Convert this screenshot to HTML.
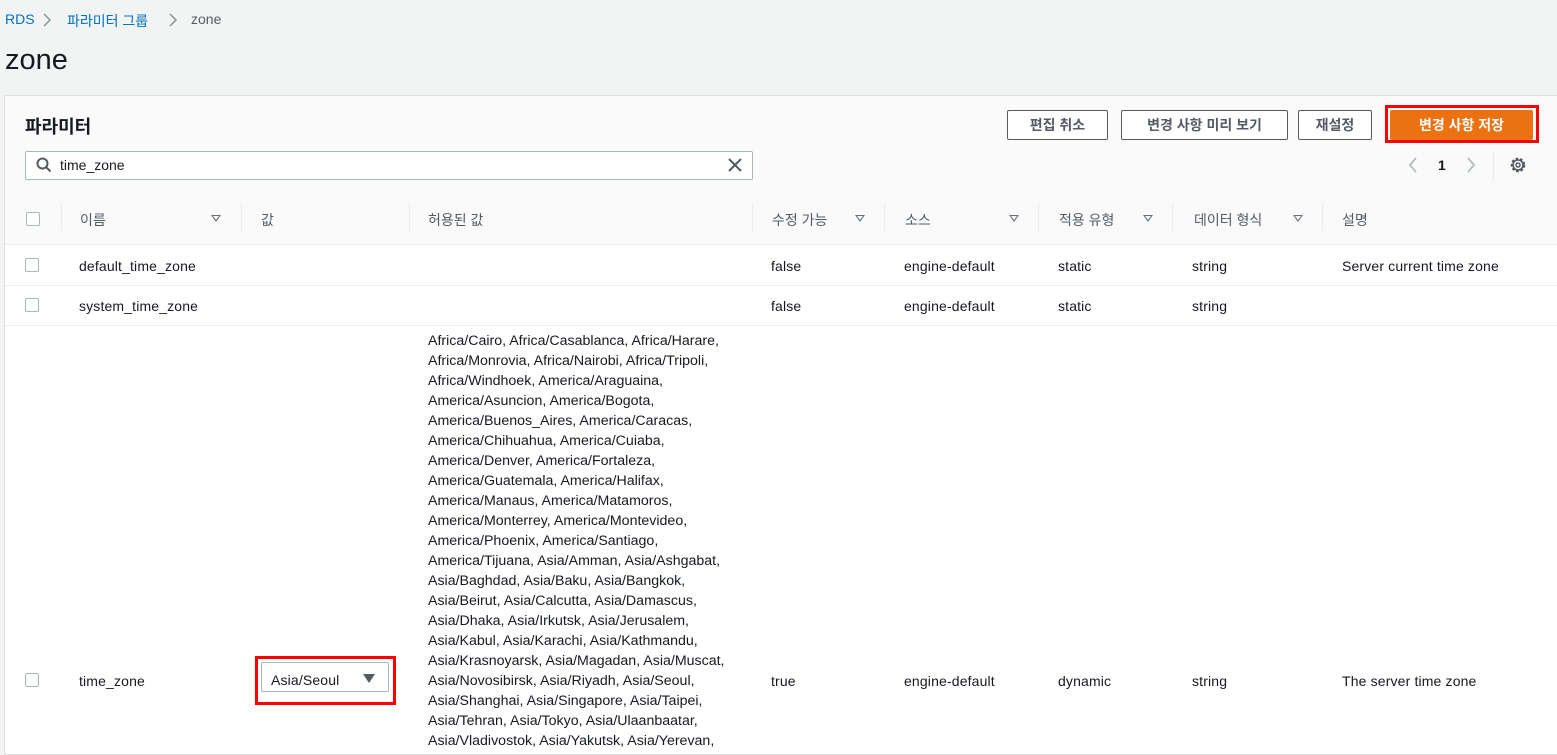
<!DOCTYPE html>
<html><head><meta charset="utf-8"><style>
*{margin:0;padding:0;box-sizing:border-box}
body{width:1557px;height:741px;overflow:hidden;background:#f2f3f3;font-family:"Liberation Sans","Noto Sans CJK KR",sans-serif;font-size:14px;color:#16191f;position:relative}
.a{position:absolute;white-space:nowrap}
.panel{position:absolute;left:4px;top:95px;width:1553px;height:660px;background:#fff;border:1px solid #e0e0e0;border-right:none}
.hd{position:absolute;left:0;top:0;width:100%;height:149px;background:#fafafa;border-bottom:1px solid #eaeded}
.btn{position:absolute;top:14px;height:30px;border:1px solid #545b64;border-radius:2px;background:#fff;font-weight:bold;font-size:14px;color:#545b64;text-align:center;line-height:28px}
.cb{position:absolute;width:14px;height:14px;border:1px solid #aab7b8;border-radius:2px;background:#fff}
.dv{position:absolute;top:107px;width:1px;height:28px;background:#eaeded}
.sort{position:absolute;top:119px;width:0;height:0;border-left:5px solid transparent;border-right:5px solid transparent;border-top:7px solid #687078}
.sort:after{content:"";position:absolute;left:-3px;top:-6px;border-left:3px solid transparent;border-right:3px solid transparent;border-top:4px solid #fafafa}
.rl{position:absolute;left:0;width:100%;height:1px;background:#eaeded}
.th{position:absolute;top:114px;font-size:14px;color:#545b64}
.t{position:absolute;font-size:14px;letter-spacing:0.15px}
.al{position:absolute;left:423px;top:235px;font-size:14.2px;line-height:20px;white-space:pre}
</style></head><body>
<div class="a" style="left:5px;top:11px;color:#0073bb;font-size:14px">RDS</div>
<svg class="a" style="left:42px;top:12px" width="10" height="16"><path d="M2 2l6 6-6 6" stroke="#879596" stroke-width="1.5" fill="none"/></svg>
<div class="a" style="left:67px;top:11px;color:#0073bb;font-size:14px">파라미터 그룹</div>
<svg class="a" style="left:168px;top:12px" width="10" height="16"><path d="M2 2l6 6-6 6" stroke="#879596" stroke-width="1.5" fill="none"/></svg>
<div class="a" style="left:191px;top:11px;color:#545b64;font-size:14px">zone</div>
<div class="a" style="left:5px;top:44px;font-size:29px">zone</div>
<div class="panel">
<div class="hd"></div>
<div class="a" style="left:20px;top:17px;font-size:18px;font-weight:bold">파라미터</div>
<div class="btn" style="left:1002px;width:101px">편집 취소</div>
<div class="btn" style="left:1116px;width:167px">변경 사항 미리 보기</div>
<div class="btn" style="left:1293px;width:74px">재설정</div>
<div class="a" style="left:1380px;top:9px;width:154px;height:38px;border:3px solid #f00"></div>
<div class="btn" style="left:1385px;width:143px;background:#ec7211;border-color:#ec7211;color:#fff">변경 사항 저장</div>
<div class="a" style="left:20px;top:55px;width:728px;height:29px;border:1px solid #aab7b8;border-radius:2px;background:#fff"></div>
<svg class="a" style="left:31px;top:61px" width="16" height="16"><circle cx="6.5" cy="6.5" r="5" stroke="#545b64" stroke-width="2" fill="none"/><path d="M10 10l4.5 4.5" stroke="#545b64" stroke-width="2"/></svg>
<div class="a" style="left:55px;top:61px;font-size:14px">time_zone</div>
<svg class="a" style="left:722px;top:61px" width="16" height="16"><path d="M2 2l12 12M14 2L2 14" stroke="#545b64" stroke-width="2"/></svg>
<svg class="a" style="left:1402px;top:61px" width="12" height="16"><path d="M9 1L3 8l6 7" stroke="#aab7b8" stroke-width="1.6" fill="none"/></svg>
<div class="a" style="left:1433px;top:61px;font-weight:bold;font-size:14px">1</div>
<svg class="a" style="left:1460px;top:61px" width="12" height="16"><path d="M3 1l6 7-6 7" stroke="#aab7b8" stroke-width="1.6" fill="none"/></svg>
<div class="a" style="left:1488px;top:55px;width:1px;height:30px;background:#eaeded"></div>
<svg class="a" style="left:1504px;top:60px" width="18" height="18" viewBox="0 0 18 18"><circle cx="9" cy="9" r="6" stroke="#545b64" stroke-width="2.6" fill="none" stroke-dasharray="2.6 1.7"/><circle cx="9" cy="9" r="5" stroke="#545b64" stroke-width="1.6" fill="none"/><circle cx="9" cy="9" r="2" stroke="#545b64" stroke-width="1.5" fill="none"/></svg>
<div class="cb" style="left:21px;top:116px"></div>
<div class="dv" style="left:56px"></div><div class="dv" style="left:236px"></div><div class="dv" style="left:404px"></div><div class="dv" style="left:747px"></div><div class="dv" style="left:879px"></div><div class="dv" style="left:1033px"></div><div class="dv" style="left:1167px"></div><div class="dv" style="left:1317px"></div>
<div class="th" style="left:75px">이름</div><div class="sort" style="left:206px"></div>
<div class="th" style="left:256px">값</div>
<div class="th" style="left:423px">허용된 값</div>
<div class="th" style="left:767px">수정 가능</div><div class="sort" style="left:850px"></div>
<div class="th" style="left:900px">소스</div><div class="sort" style="left:1004px"></div>
<div class="th" style="left:1054px">적용 유형</div><div class="sort" style="left:1138px"></div>
<div class="th" style="left:1189px">데이터 형식</div><div class="sort" style="left:1288px"></div>
<div class="th" style="left:1337px">설명</div>
<div class="cb" style="left:20px;top:162px"></div>
<div class="t" style="left:74px;top:162px">default_time_zone</div>
<div class="t" style="left:766px;top:162px">false</div>
<div class="t" style="left:899px;top:162px">engine-default</div>
<div class="t" style="left:1053px;top:162px">static</div>
<div class="t" style="left:1187px;top:162px">string</div>
<div class="t" style="left:1337px;top:162px">Server current time zone</div>
<div class="rl" style="top:189px"></div>
<div class="cb" style="left:20px;top:202px"></div>
<div class="t" style="left:74px;top:202px">system_time_zone</div>
<div class="t" style="left:766px;top:202px">false</div>
<div class="t" style="left:899px;top:202px">engine-default</div>
<div class="t" style="left:1053px;top:202px">static</div>
<div class="t" style="left:1187px;top:202px">string</div>
<div class="rl" style="top:229px"></div>
<div class="al">Africa/Cairo, Africa/Casablanca, Africa/Harare,
Africa/Monrovia, Africa/Nairobi, Africa/Tripoli,
Africa/Windhoek, America/Araguaina,
America/Asuncion, America/Bogota,
America/Buenos_Aires, America/Caracas,
America/Chihuahua, America/Cuiaba,
America/Denver, America/Fortaleza,
America/Guatemala, America/Halifax,
America/Manaus, America/Matamoros,
America/Monterrey, America/Montevideo,
America/Phoenix, America/Santiago,
America/Tijuana, Asia/Amman, Asia/Ashgabat,
Asia/Baghdad, Asia/Baku, Asia/Bangkok,
Asia/Beirut, Asia/Calcutta, Asia/Damascus,
Asia/Dhaka, Asia/Irkutsk, Asia/Jerusalem,
Asia/Kabul, Asia/Karachi, Asia/Kathmandu,
Asia/Krasnoyarsk, Asia/Magadan, Asia/Muscat,
Asia/Novosibirsk, Asia/Riyadh, Asia/Seoul,
Asia/Shanghai, Asia/Singapore, Asia/Taipei,
Asia/Tehran, Asia/Tokyo, Asia/Ulaanbaatar,
Asia/Vladivostok, Asia/Yakutsk, Asia/Yerevan,</div>
<div class="cb" style="left:20px;top:577px"></div>
<div class="t" style="left:74px;top:577px">time_zone</div>
<div class="a" style="left:250px;top:560px;width:141px;height:49px;border:3px solid #f00"></div>
<div class="a" style="left:256px;top:566px;width:128px;height:30px;border:1px solid #aab7b8;border-radius:2px;background:#fff"></div>
<div class="t" style="left:266px;top:576px">Asia/Seoul</div>
<div class="a" style="left:358px;top:578px;border-left:6px solid transparent;border-right:6px solid transparent;border-top:9px solid #545b64"></div>
<div class="t" style="left:766px;top:577px">true</div>
<div class="t" style="left:899px;top:577px">engine-default</div>
<div class="t" style="left:1053px;top:577px">dynamic</div>
<div class="t" style="left:1187px;top:577px">string</div>
<div class="t" style="left:1337px;top:577px">The server time zone</div>
</div>
</body></html>
